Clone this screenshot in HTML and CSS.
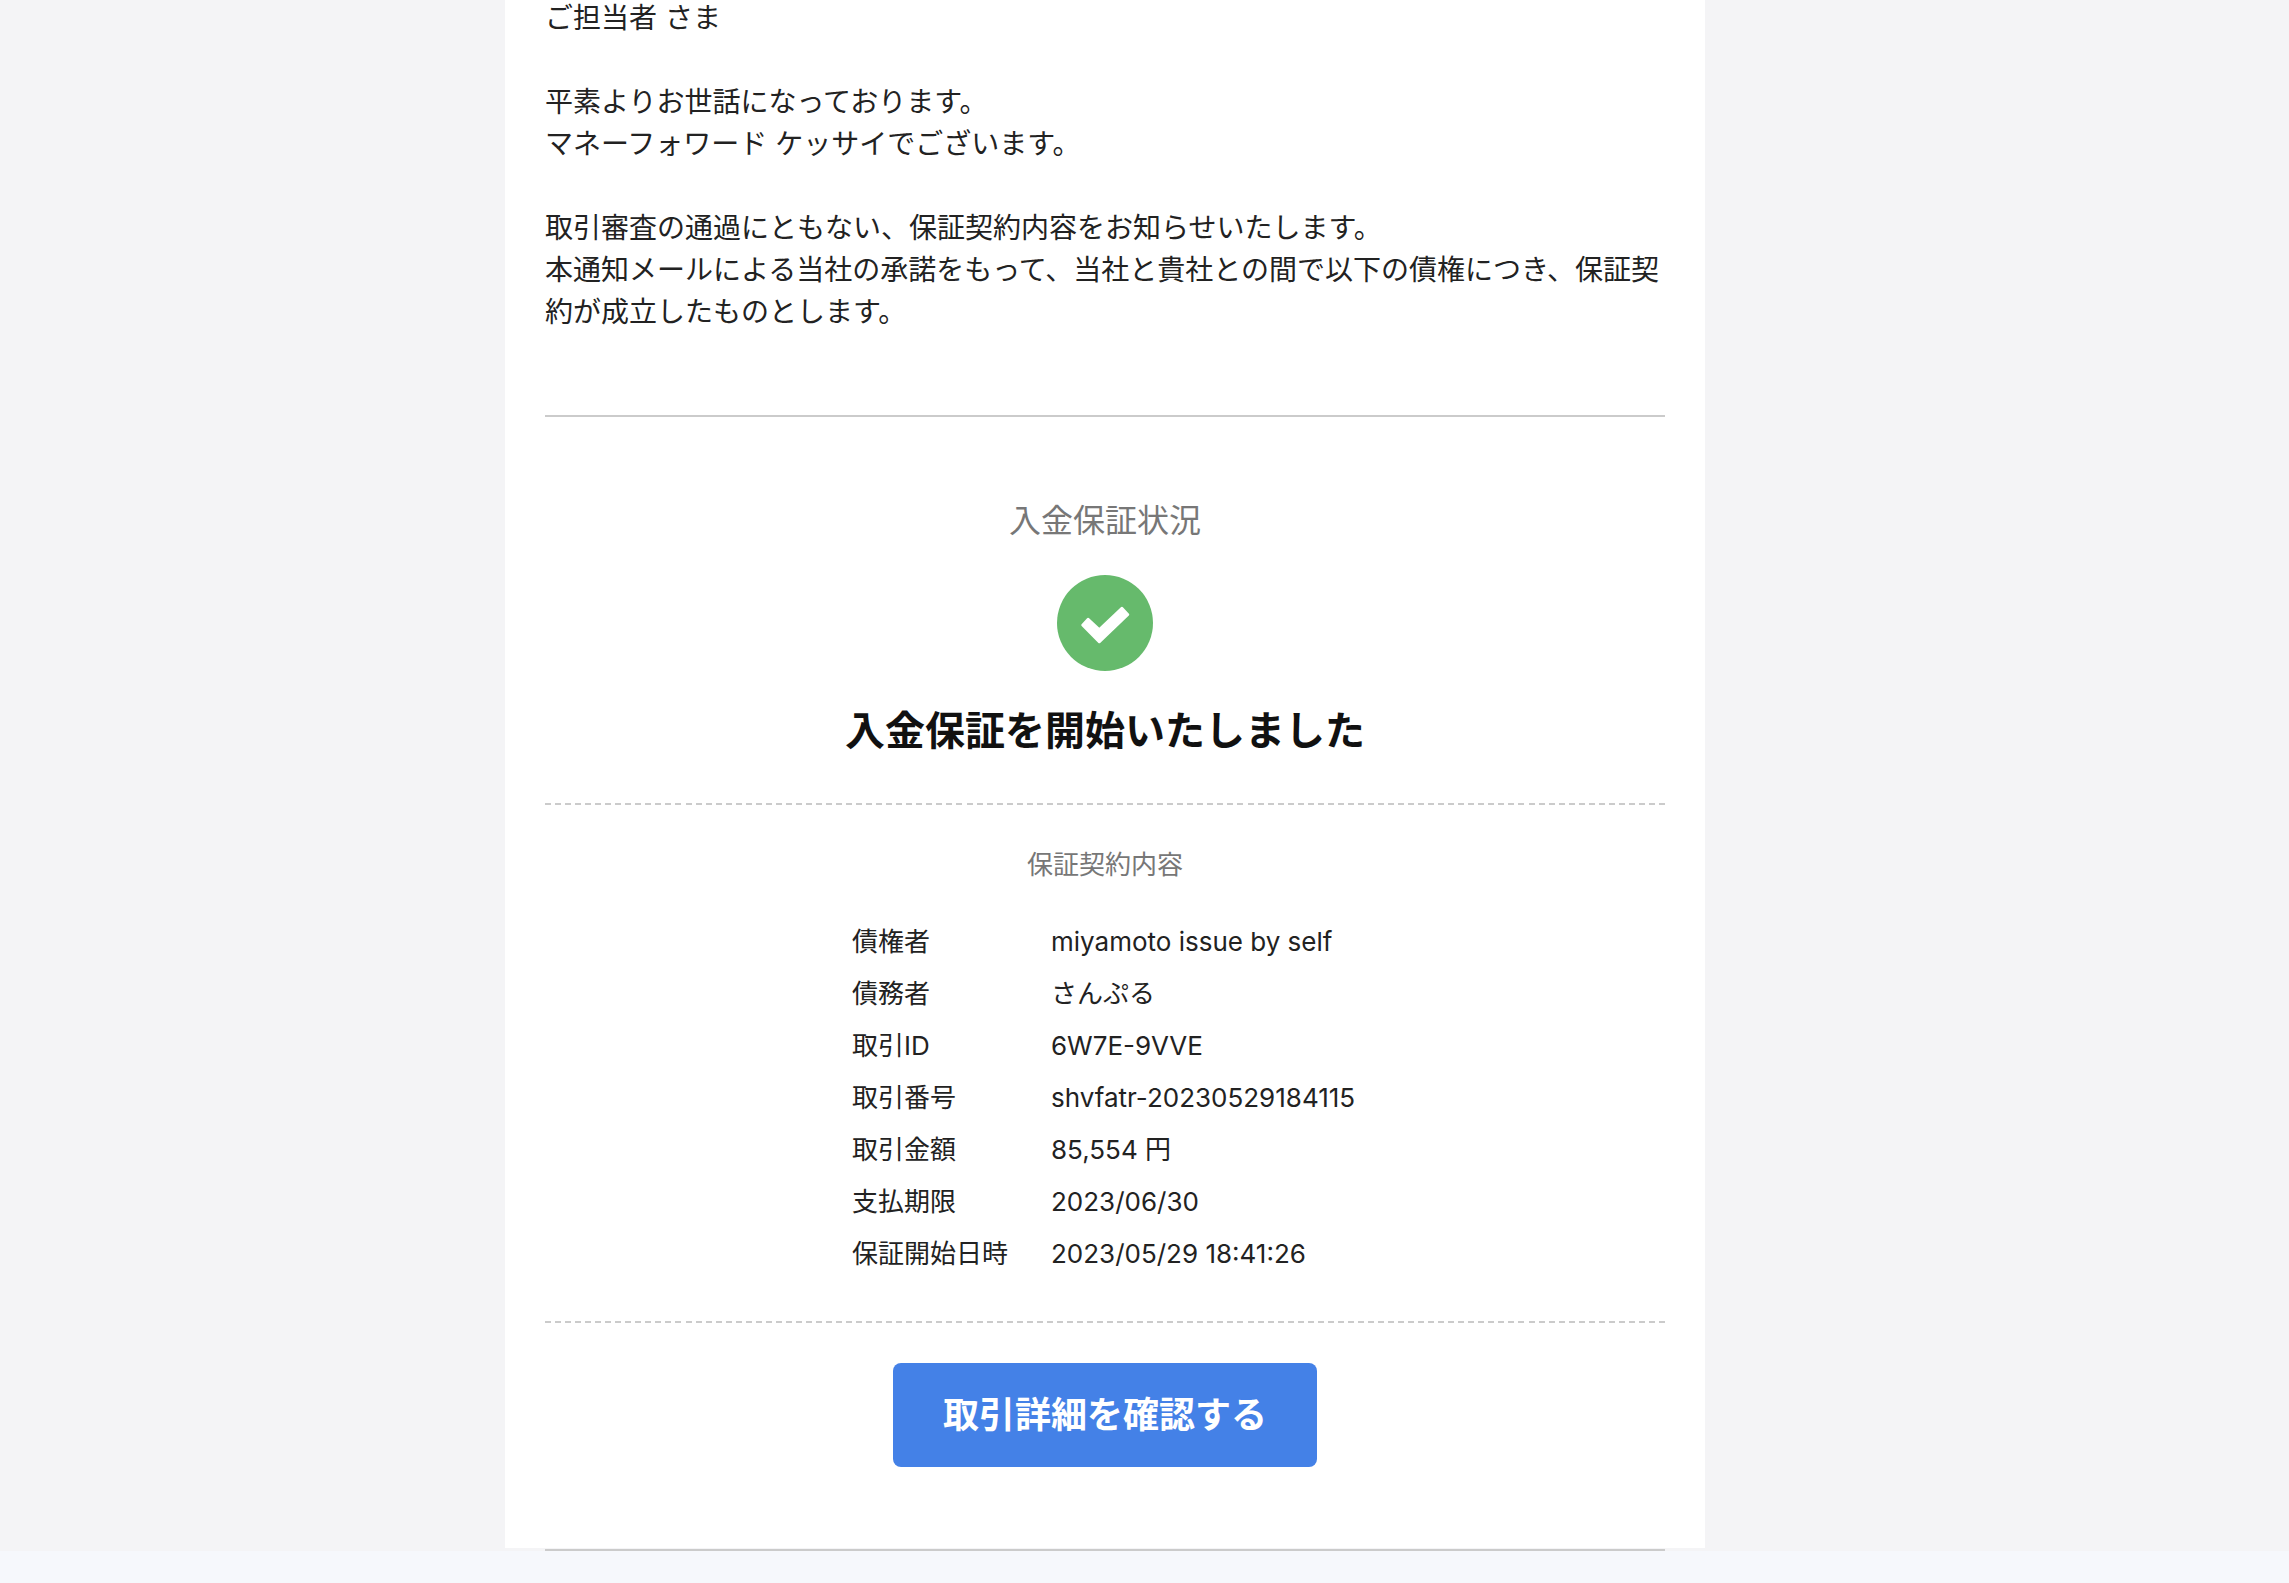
FILE: index.html
```html
<!DOCTYPE html>
<html lang="ja">
<head>
  <meta charset="UTF-8">
  <meta name="viewport" content="width=device-width, initial-scale=1.0">
  <title>入金保証状況</title>
  <link rel="stylesheet" href="styles.css">
</head>
<body>
  <div class="viewport">
    <div class="mail">
      <div class="greeting">
        <p>ご担当者 さま</p>
        <p>平素よりお世話になっております。<br>マネーフォワード ケッサイでございます。</p>
        <p>取引審査の通過にともない、保証契約内容をお知らせいたします。<br>本通知メールによる当社の承諾をもって、当社と貴社との間で以下の債権につき、保証契約が成立したものとします。</p>
      </div>

      <div class="status dashed">
        <div class="status-label">入金保証状況</div>
        <svg class="status-icon" viewBox="0 0 96 96" width="96" height="96">
          <circle cx="48" cy="48" r="48" fill="#66ba6c"/>
          <path d="M31 44 L42.3 54.5 L65 33 L71 39.5 L42.3 67 L25.5 50 Z" fill="#fff" stroke="#fff" stroke-width="2.5" stroke-linejoin="round"/>
        </svg>
        <h1 class="status-title">入金保証を開始いたしました</h1>
      </div>

      <div class="contract dashed">
        <h2>保証契約内容</h2>
        <dl class="contract-rows">
          <dt>債権者</dt><dd>miyamoto issue by self</dd>
          <dt>債務者</dt><dd>さんぷる</dd>
          <dt>取引ID</dt><dd>6W7E-9VVE</dd>
          <dt>取引番号</dt><dd>shvfatr-20230529184115</dd>
          <dt>取引金額</dt><dd>85,554 円</dd>
          <dt>支払期限</dt><dd>2023/06/30</dd>
          <dt>保証開始日時</dt><dd>2023/05/29 18:41:26</dd>
        </dl>
      </div>

      <div class="action">
        <a class="btn" href="#">取引詳細を確認する</a>
      </div>
    </div>
  </div>
  <div class="bottom-bar"></div>
</body>
</html>
```

FILE: styles.css
```css
html, body {
  margin: 0;
  height: 100%;
}
body {
  display: flex;
  flex-direction: column;
  height: 1583px;
  overflow: hidden;
  font-family: Inter, "Noto Sans CJK JP", sans-serif;
  font-size: 28px;
  line-height: 42px;
  color: #222;
}
.viewport {
  flex: 1;
  min-height: 0;
  overflow: hidden;
  padding-right: 79px;
  background-color: #f4f4f6;
}
.bottom-bar {
  height: 32px;
  background-color: #f6f8fc;
}
.mail {
  width: 1120px;
  height: 100%;
  margin: 0 auto;
  padding: 0 40px;
  background: white;
}
.greeting {
  margin-top: -3px;
  padding-bottom: 82px;
  border-bottom: 2px solid #cbcbcb;
}
.greeting p {
  margin: 0 0 42px;
}
.greeting p:last-child {
  margin-bottom: 0;
}
/* 6px dash, gap stretched a little so the last dash ends on the edge */
.dashed {
  background: repeating-linear-gradient(to right, #cbcbcb 0 6px, transparent 6px 10.036px) left bottom / 100% 2px no-repeat;
}
.status {
  padding-top: 83px;
  padding-bottom: 48px;
  text-align: center;
}
.status-label {
  font-size: 32px;
  line-height: 42px;
  color: #777;
}
.status-icon {
  display: block;
  margin: 33px auto 0;
}
.status-title {
  margin: 34px 0 0;
  font-size: 40px;
  line-height: 52px;
  font-weight: bold;
  color: #111;
}
.contract {
  padding: 42px 0 43px;
}
.contract h2 {
  margin: 0;
  font-size: 26px;
  line-height: 36px;
  font-weight: normal;
  text-align: center;
  color: #777;
}
.contract-rows {
  display: grid;
  grid-template-columns: 199px 307px;
  grid-auto-rows: 52px;
  align-items: center;
  justify-content: center;
  margin: 33px 0 0;
  font-size: 26px;
  white-space: nowrap;
}
.contract-rows dd {
  margin: 0;
}
.action {
  padding-top: 40px;
  padding-bottom: 82px;
  border-bottom: 2px solid #cbcbcb;
  text-align: center;
}
.btn {
  display: inline-block;
  width: 424px;
  height: 104px;
  line-height: 104px;
  border-radius: 8px;
  background-color: #4481e7;
  color: white;
  font-size: 36px;
  font-weight: bold;
  text-decoration: none;
  vertical-align: top;
}
```
